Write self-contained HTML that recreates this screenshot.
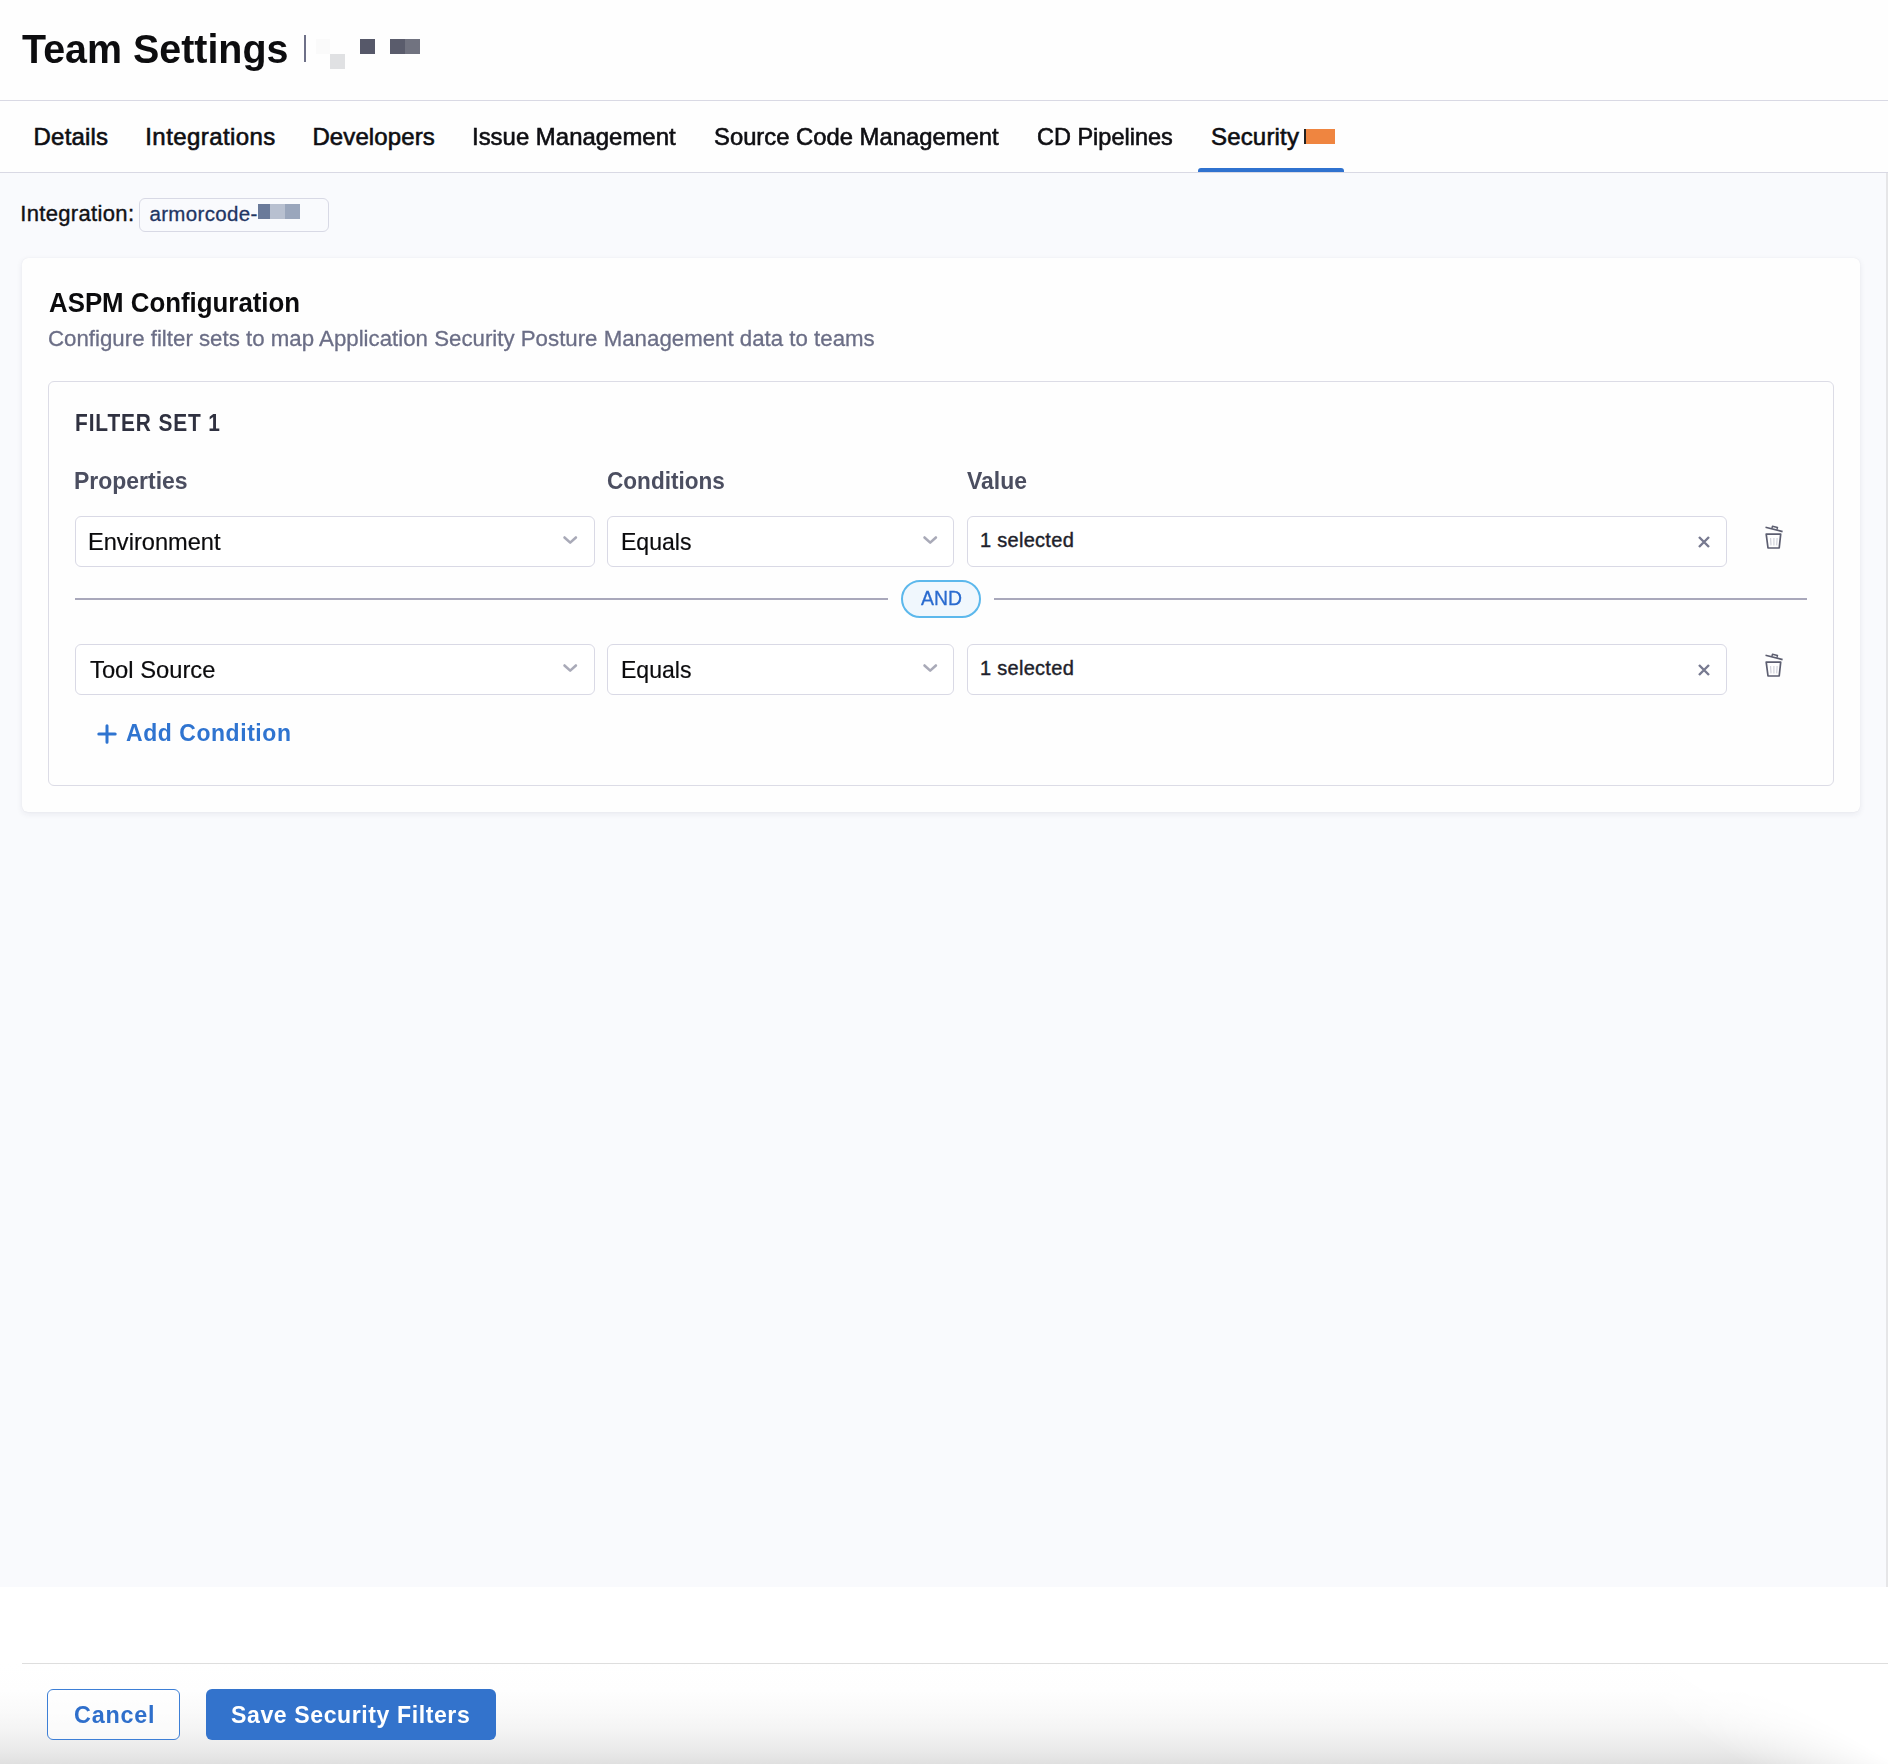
<!DOCTYPE html>
<html><head><meta charset="utf-8"><style>
*{margin:0;padding:0;box-sizing:border-box}
html,body{width:1888px;height:1764px;overflow:hidden;background:#ffffff;font-family:"Liberation Sans",sans-serif}
.t{position:absolute;white-space:nowrap;line-height:1;transform-origin:0 0}
.abs{position:absolute}
.box{position:absolute;border:1.5px solid #d9d9e5;border-radius:6px;background:#fff}
.chev,.ic{position:absolute}
</style></head><body>
<div class="abs" style="left:0;top:0;width:1888px;height:100px;background:#fefefe"></div>
<div class="abs" style="left:0;top:100px;width:1888px;height:1px;background:#d9d9e4"></div>
<div class="abs" style="left:0;top:101px;width:1888px;height:71px;background:#fefefe"></div>
<div class="abs" style="left:0;top:172px;width:1888px;height:1px;background:#d9d9e4"></div>
<div class="abs" style="left:1198px;top:168px;width:146px;height:4px;background:#2f72cf;border-radius:3px 3px 0 0"></div>
<div class="abs" style="left:0;top:173px;width:1886px;height:1414px;background:#f9fafd"></div>
<div class="abs" style="left:1886px;top:173px;width:2px;height:1414px;background:#e6e6e8"></div>
<!-- title decorations -->
<div class="abs" style="left:304px;top:35px;width:2px;height:27px;background:#6e7088"></div>
<div class="abs" style="left:316px;top:39px;width:14px;height:15px;background:#fafafa"></div>
<div class="abs" style="left:330px;top:54px;width:15px;height:15px;background:#e0e1e3"></div>
<div class="abs" style="left:360px;top:39px;width:15px;height:15px;background:#565869"></div>
<div class="abs" style="left:390px;top:39px;width:15px;height:15px;background:#5a5c6c"></div>
<div class="abs" style="left:405px;top:39px;width:15px;height:15px;background:#717380"></div>
<div class="abs" style="left:1304px;top:129px;width:31px;height:15px;background:#ef8540"></div>
<div class="abs" style="left:1304px;top:129px;width:1.5px;height:15px;background:#222"></div>
<!-- integration chip -->
<div class="abs" style="left:139px;top:198px;width:190px;height:34px;border:1px solid #d8d9e5;border-radius:6px"></div>
<div class="abs" style="left:258px;top:204px;width:12px;height:15px;background:#6a7a9a"></div>
<div class="abs" style="left:270px;top:204px;width:15px;height:15px;background:#b8c0d0"></div>
<div class="abs" style="left:285px;top:204px;width:15px;height:15px;background:#9aa6bc"></div>
<!-- card -->
<div class="abs" style="left:22px;top:258px;width:1838px;height:554px;background:#fefefe;border-radius:6px;box-shadow:0 2px 6px rgba(40,40,80,0.08),0 0 1px rgba(40,40,80,0.1)"></div>
<div class="abs" style="left:48px;top:381px;width:1786px;height:405px;border:1.5px solid #dcdce6;border-radius:6px"></div>
<div class="abs" style="left:75px;top:598px;width:813px;height:2px;background:#a9a8bb"></div>
<div class="abs" style="left:994px;top:598px;width:813px;height:2px;background:#a9a8bb"></div>
<div class="abs" style="left:901px;top:580px;width:80px;height:38px;border:2px solid #5cb8ec;border-radius:19px;background:#f0f7fd"></div>
<div class="box" style="left:75px;top:516px;width:520px;height:51px"></div><div class="box" style="left:607px;top:516px;width:347px;height:51px"></div><div class="box" style="left:967px;top:516px;width:760px;height:51px"></div><svg class="chev" style="left:562px;top:535px" width="16" height="10" viewBox="0 0 16 10"><path d="M2.5 2.5 L8.2 7.6 L13.9 2.5" fill="none" stroke="#a9aab8" stroke-width="2.6" stroke-linecap="round" stroke-linejoin="round"/></svg><svg class="chev" style="left:922px;top:535px" width="16" height="10" viewBox="0 0 16 10"><path d="M2.5 2.5 L8.2 7.6 L13.9 2.5" fill="none" stroke="#a9aab8" stroke-width="2.6" stroke-linecap="round" stroke-linejoin="round"/></svg><svg class="ic" style="left:1697px;top:535px" width="14" height="14" viewBox="0 0 14 14"><path d="M2 2 L12 12 M12 2 L2 12" stroke="#777a90" stroke-width="2.4"/></svg><svg class="ic" style="left:1763px;top:523px" width="22" height="26" viewBox="0 0 22 26">
<g fill="none" stroke="#5c5e70" stroke-width="1.7" stroke-linejoin="round">
<path d="M2.5 4.3 L19.6 8.6"/>
<path d="M8.9 5.4 L9.5 3.2 L14.5 4.4 L13.9 6.6" stroke-width="1.5"/>
<path d="M3.2 11.1 L17.7 11.1 L16.2 25.0 L5.0 25.0 Z"/>
</g>
<g stroke="#cdced8" stroke-width="1.1"><path d="M7.6 15 L8.0 22.4"/><path d="M10.9 15 L10.9 22.4"/><path d="M14.1 15 L13.7 22.4"/></g>
</svg><div class="box" style="left:75px;top:644px;width:520px;height:51px"></div><div class="box" style="left:607px;top:644px;width:347px;height:51px"></div><div class="box" style="left:967px;top:644px;width:760px;height:51px"></div><svg class="chev" style="left:562px;top:663px" width="16" height="10" viewBox="0 0 16 10"><path d="M2.5 2.5 L8.2 7.6 L13.9 2.5" fill="none" stroke="#a9aab8" stroke-width="2.6" stroke-linecap="round" stroke-linejoin="round"/></svg><svg class="chev" style="left:922px;top:663px" width="16" height="10" viewBox="0 0 16 10"><path d="M2.5 2.5 L8.2 7.6 L13.9 2.5" fill="none" stroke="#a9aab8" stroke-width="2.6" stroke-linecap="round" stroke-linejoin="round"/></svg><svg class="ic" style="left:1697px;top:663px" width="14" height="14" viewBox="0 0 14 14"><path d="M2 2 L12 12 M12 2 L2 12" stroke="#777a90" stroke-width="2.4"/></svg><svg class="ic" style="left:1763px;top:651px" width="22" height="26" viewBox="0 0 22 26">
<g fill="none" stroke="#5c5e70" stroke-width="1.7" stroke-linejoin="round">
<path d="M2.5 4.3 L19.6 8.6"/>
<path d="M8.9 5.4 L9.5 3.2 L14.5 4.4 L13.9 6.6" stroke-width="1.5"/>
<path d="M3.2 11.1 L17.7 11.1 L16.2 25.0 L5.0 25.0 Z"/>
</g>
<g stroke="#cdced8" stroke-width="1.1"><path d="M7.6 15 L8.0 22.4"/><path d="M10.9 15 L10.9 22.4"/><path d="M14.1 15 L13.7 22.4"/></g>
</svg>
<!-- plus -->
<svg class="abs" style="left:97px;top:724px" width="20" height="20" viewBox="0 0 20 20"><path d="M10 1.8 V18.2 M1.8 10 H18.2" stroke="#2f74d0" stroke-width="3" stroke-linecap="round"/></svg>
<!-- footer -->
<div class="abs" style="left:0;top:1664px;width:1888px;height:100px;background:linear-gradient(#fff 0px,#fefefe 26px,#fafafa 46px,#f4f4f4 66px,#eaeaea 86px,#e0e0e0 100px);-webkit-mask-image:linear-gradient(32deg,#000 925px,transparent 1005px);mask-image:linear-gradient(32deg,#000 925px,transparent 1005px)"></div>
<div class="abs" style="left:22px;top:1663px;width:1866px;height:1px;background:#dedede"></div>
<div class="abs" style="left:47px;top:1689px;width:133px;height:51px;border:1.5px solid #3d7fd6;border-radius:6px;background:rgba(255,255,255,0.6)"></div>
<div class="abs" style="left:206px;top:1689px;width:290px;height:51px;background:#3373cc;border-radius:6px"></div>
<div class="t" style="left:22.23px;top:27.73px;font-size:41.5px;letter-spacing:0.0px;font-weight:700;color:#0d0d0f;transform:scaleX(0.9494);">Team Settings</div><div class="t" style="left:33.6px;top:124.7px;font-size:24.0px;letter-spacing:0.18px;font-weight:400;color:#0e0e12;-webkit-text-stroke:0.6px #0e0e12;">Details</div><div class="t" style="left:145.3px;top:124.7px;font-size:24.0px;letter-spacing:0.41px;font-weight:400;color:#0e0e12;-webkit-text-stroke:0.6px #0e0e12;">Integrations</div><div class="t" style="left:312.4px;top:124.7px;font-size:24.0px;letter-spacing:0.11px;font-weight:400;color:#0e0e12;-webkit-text-stroke:0.6px #0e0e12;">Developers</div><div class="t" style="left:471.51px;top:124.7px;font-size:24.0px;letter-spacing:0.0px;font-weight:400;color:#0e0e12;transform:scaleX(0.9975);-webkit-text-stroke:0.6px #0e0e12;">Issue Management</div><div class="t" style="left:714.11px;top:124.7px;font-size:24.0px;letter-spacing:0.0px;font-weight:400;color:#0e0e12;transform:scaleX(0.9923);-webkit-text-stroke:0.6px #0e0e12;">Source Code Management</div><div class="t" style="left:1037.33px;top:124.7px;font-size:24.0px;letter-spacing:0.0px;font-weight:400;color:#0e0e12;transform:scaleX(0.9788);-webkit-text-stroke:0.6px #0e0e12;">CD Pipelines</div><div class="t" style="left:1211.0px;top:124.7px;font-size:24.0px;letter-spacing:0.17px;font-weight:400;color:#0e0e12;-webkit-text-stroke:0.6px #0e0e12;">Security</div><div class="t" style="left:20.2px;top:202.6px;font-size:22.0px;letter-spacing:0.34px;font-weight:400;color:#111116;-webkit-text-stroke:0.4px #111116;">Integration:</div><div class="t" style="left:149.4px;top:204.47px;font-size:20.5px;letter-spacing:0.36px;font-weight:400;color:#1f3563;-webkit-text-stroke:0.3px #1f3563;">armorcode-</div><div class="t" style="left:48.53px;top:289.95px;font-size:27.0px;letter-spacing:0.0px;font-weight:700;color:#0b0b0d;transform:scaleX(0.9566);">ASPM Configuration</div><div class="t" style="left:48.11px;top:327.77px;font-size:22.5px;letter-spacing:0.0px;font-weight:400;color:#6b6e86;transform:scaleX(0.9896);-webkit-text-stroke:0.3px #6b6e86;">Configure filter sets to map Application Security Posture Management data to teams</div><div class="t" style="left:74.61px;top:410.7px;font-size:24.0px;letter-spacing:1.0px;font-weight:700;color:#2f3140;transform:scaleX(0.8704);">FILTER SET 1</div><div class="t" style="left:74.34px;top:469.82px;font-size:23.5px;letter-spacing:0.0px;font-weight:700;color:#4b4e60;transform:scaleX(0.9771);">Properties</div><div class="t" style="left:607.26px;top:469.4px;font-size:24.0px;letter-spacing:0.0px;font-weight:700;color:#4b4e60;transform:scaleX(0.9408);">Conditions</div><div class="t" style="left:967.1px;top:469.82px;font-size:23.5px;letter-spacing:0.0px;font-weight:700;color:#4b4e60;transform:scaleX(0.9768);">Value</div><div class="t" style="left:88.13px;top:530.4px;font-size:24.0px;letter-spacing:0.0px;font-weight:400;color:#0b0b0d;transform:scaleX(0.9834);-webkit-text-stroke:0.2px #0b0b0d;">Environment</div><div class="t" style="left:620.78px;top:530.4px;font-size:24.0px;letter-spacing:0.0px;font-weight:400;color:#0b0b0d;transform:scaleX(0.9603);-webkit-text-stroke:0.2px #0b0b0d;">Equals</div><div class="t" style="left:979.9px;top:529.9px;font-size:20px;letter-spacing:0.3px;font-weight:400;color:#1e1f2b;-webkit-text-stroke:0.4px #1e1f2b;">1 selected</div><div class="t" style="left:89.61px;top:658.4px;font-size:24.0px;letter-spacing:0.0px;font-weight:400;color:#0b0b0d;transform:scaleX(0.9896);-webkit-text-stroke:0.2px #0b0b0d;">Tool Source</div><div class="t" style="left:620.78px;top:658.4px;font-size:24.0px;letter-spacing:0.0px;font-weight:400;color:#0b0b0d;transform:scaleX(0.9603);-webkit-text-stroke:0.2px #0b0b0d;">Equals</div><div class="t" style="left:979.9px;top:657.9px;font-size:20px;letter-spacing:0.3px;font-weight:400;color:#1e1f2b;-webkit-text-stroke:0.4px #1e1f2b;">1 selected</div><div class="t" style="left:920.7px;top:587.7px;font-size:20.0px;letter-spacing:0.0px;font-weight:400;color:#2a6bcf;transform:scaleX(0.9709);-webkit-text-stroke:0.3px #2a6bcf;">AND</div><div class="t" style="left:126.23px;top:720.5px;font-size:24.0px;letter-spacing:0.6px;font-weight:700;color:#2f74d0;transform:scaleX(0.956);">Add Condition</div><div class="t" style="left:73.63px;top:1703.3px;font-size:24.0px;letter-spacing:0.8px;font-weight:700;color:#2f6fcb;transform:scaleX(0.9738);">Cancel</div><div class="t" style="left:231.23px;top:1703.3px;font-size:24.0px;letter-spacing:0.6px;font-weight:700;color:#ffffff;transform:scaleX(0.9623);">Save Security Filters</div>
</body></html>
